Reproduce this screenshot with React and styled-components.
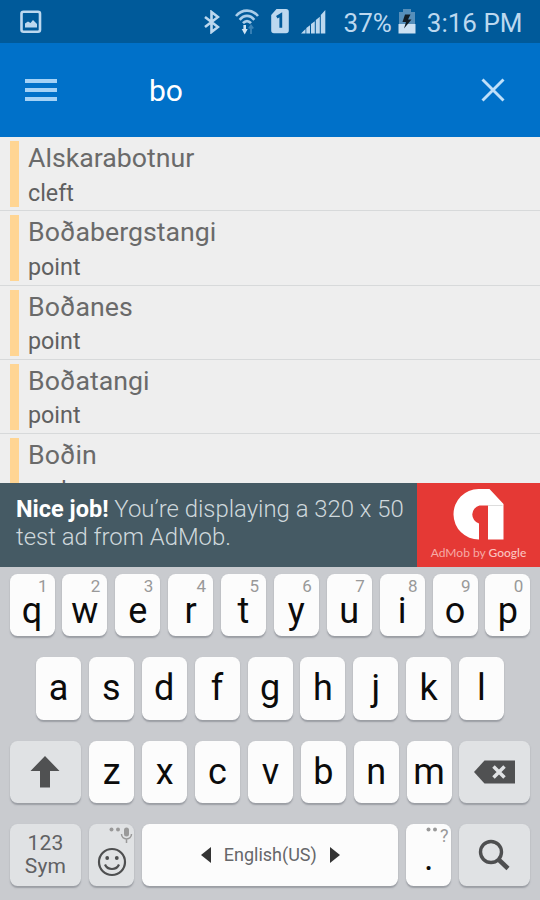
import React from 'react';
import styled, { createGlobalStyle } from 'styled-components';


const GlobalStyle = createGlobalStyle`
    * {
        box-sizing: border-box;
    }

    body {
        margin: 0;
        font-family: Roboto, "Liberation Sans", sans-serif;
    }
`;

const Screen = styled.div`
    display: flex;
    flex-direction: column;
    width: 540px;
    height: 900px;
    overflow: hidden;
    background: #c9cbcf;
`;

const StatusBar = styled.div`
    display: flex;
    align-items: center;
    justify-content: space-between;
    height: 43px;
    flex: none;
    padding: 0 17.5px 0 20px;
    background: #005a9a;
    color: #bcd8ef;
`;

const StatusGroup = styled.div`
    display: flex;
    align-items: center;
`;

const StatusText = styled.span`
    font-size: 26px;
    line-height: 43px;
    padding-top: 3px;
    margin-left: ${(props) => props.$left}px;
    white-space: nowrap;
`;

const StatusIcon = styled.svg`
    flex: none;
    margin-left: ${(props) => props.$left || 0}px;
`;

const AppBar = styled.div`
    display: flex;
    align-items: center;
    height: 94px;
    flex: none;
    padding: 0 34px 0 25px;
    background: #0071c9;
`;

const SearchText = styled.div`
    flex: 1;
    padding: 2px 0 0 92px;
    color: #fff;
    font-size: 30px;
    line-height: 36px;
`;

const MenuIcon = styled.div`
    display: flex;
    flex-direction: column;
    gap: 5.5px;
    width: 32px;
`;

const MenuLine = styled.div`
    height: 3.6px;
    background: #a4d2f6;
`;

const List = styled.div`
    height: 346px;
    flex: none;
    overflow: hidden;
    background: #eee;
`;

const ItemContainer = styled.div`
    display: flex;
    height: 74.3px;
    padding: 4px 0 3px 9.5px;
    border-bottom: 1.5px solid #d7d9da;
`;

const Marker = styled.div`
    width: 9px;
    height: 66px;
    margin-right: 9.5px;
    background: #ffd593;
`;

const PlaceName = styled.div`
    color: #6a6a6a;
    font-size: 26.7px;
    line-height: 34px;
`;

const PlaceType = styled.div`
    color: #606060;
    font-size: 23.3px;
    line-height: 34px;
    padding-top: 0.5px;
`;

const Ad = styled.div`
    display: flex;
    height: 84px;
    flex: none;
    background: #455a64;
`;

const AdText = styled.div`
    width: 417px;
    padding: 12px 0 0 16px;
    color: #cfd8dc;
    font-size: 23.9px;
    font-weight: 300;
    line-height: 28px;
    white-space: nowrap;

    b {
        color: #fff;
        font-size: 23.5px;
        font-weight: 700;
    }
`;

const AdLogo = styled.div`
    display: flex;
    flex-direction: column;
    align-items: center;
    width: 123px;
    padding-top: 6px;
    background: #e53935;
    color: #f6aaa5;
    font-family: Lato, sans-serif;
    font-size: 12px;
    line-height: 20px;
    white-space: nowrap;
`;

const Google = styled.span`
    color: #fbc4c0;
    font-weight: 500;
`;

const Keyboard = styled.div`
    display: flex;
    flex-direction: column;
    gap: 21px;
    flex: 1;
    padding: 7px 9.5px 0;
    background: #c9cbcf;
`;

const KeyRow = styled.div`
    display: flex;
    gap: 7.88px;
    padding: 0 ${(props) => props.$inset || 0}px;
`;

const Key = styled.div`
    position: relative;
    display: flex;
    flex-direction: column;
    align-items: center;
    justify-content: center;
    flex: none;
    width: ${(props) => props.$width || 45}px;
    height: 62.3px;
    padding-top: ${(props) => props.$top || 0}px;
    border-radius: 7.5px;
    background: ${(props) => (props.$dark ? '#e0e2e4' : '#fcfcfc')};
    box-shadow: 0 1.5px 1.5px rgba(90, 95, 105, 0.42);
    color: #0b0b0b;
    font-size: 36px;
    line-height: 36px;
`;

const Hint = styled.span`
    position: absolute;
    top: 4px;
    right: 7px;
    color: #999;
    font-size: 17px;
    line-height: 17px;
`;

const CornerHint = styled.svg`
    position: absolute;
    top: 2px;
    right: 0;
`;

const SymLabel = styled.div`
    color: #606163;
    font-size: 21px;
    line-height: 23px;
    letter-spacing: 0.2px;
    text-align: center;
`;

const SpaceLabel = styled.div`
    display: flex;
    align-items: center;
    gap: 13px;
    color: #66676a;
    font-size: 18px;
    line-height: 22px;
`;

const places = [
  { name: 'Alskarabotnur', type: 'cleft' },
  { name: 'Boðabergstangi', type: 'point' },
  { name: 'Boðanes', type: 'point' },
  { name: 'Boðatangi', type: 'point' },
  { name: 'Boðin', type: 'rocks' },
];

const numbers = '1234567890';

function Status() {
  return (
    <StatusBar>
      <StatusIcon width="22" height="24" viewBox="0 0 22 24">
        <rect x="1.5" y="1.8" width="18.5" height="20" rx="2" fill="none" stroke="#bcd8ef" strokeWidth="2.6" />
        <path d="M5 17.5v-4l3-2 2.5 1.5 2.5-3 4 4v3.5z" fill="#bcd8ef" />
      </StatusIcon>
      <StatusGroup>
        <StatusIcon width="16" height="24" viewBox="0 0 16 24">
          <path d="M1 7l13 10-6.5 5V2L14 7 1 17" fill="none" stroke="#bcd8ef" strokeWidth="2.6" />
        </StatusIcon>
        <StatusIcon $left={15} width="24" height="28" viewBox="0 0 24 28" fill="none" stroke="#a9cde9" strokeWidth="2.6">
          <path d="M1 8C7 .8 17 .8 23 8M4.700 11.800C9 6.600 15 6.600 19.300 11.800M8 15.200c2.500-2.800 5.500-2.800 8 0" />
          <path d="M9.7 17v5" stroke="#cfe3f3" />
          <path d="M6.7 21h6l-3 5.5z" fill="#cfe3f3" stroke="none" />
          <path d="M16 26v-8M13.8 20.5L16 17.5l2.2 3" stroke="#3b83b7" strokeWidth="1.8" />
        </StatusIcon>
        <StatusIcon $left={12} width="18" height="25" viewBox="0 0 18 25">
          <path d="M5.5 0H15a2.8 2.8 0 0 1 2.8 2.8v18.7a2.8 2.8 0 0 1-2.8 2.8H3a2.8 2.8 0 0 1-2.8-2.8V6z" fill="#bcd8ef" />
          <path d="M5.8 8.3l4-2.5v13" fill="none" stroke="#005a9a" strokeWidth="2.8" />
        </StatusIcon>
        <StatusIcon $left={12} width="25" height="25" viewBox="0 0 25 25" fill="#bcd8ef">
          <path d="M0 24.5L4.500 20v4.5zM5.300 19l3.700-2.8v8.3H5.300zM10 15l3.8-2.8v12.3H10zM14.800 11l4-3.2v16.7h-4zM19.800 6l4.5-5v23.5h-4.500z" />
        </StatusIcon>
        <StatusText $left={18}>37%</StatusText>
        <StatusIcon $left={6} width="18" height="25" viewBox="0 0 18 25">
          <path d="M1 3h4V0h8v3h4v12H1z" fill="#568fba" />
          <path d="M.5 15h17v9.5H.5z" fill="#cce1f2" />
          <path d="M7 5.5h5.5L10 10.5h3.5L6 19.5l2-6.5H4.5z" fill="#111c24" />
        </StatusIcon>
        <StatusText $left={11}>3:16 PM</StatusText>
      </StatusGroup>
    </StatusBar>
  );
}

function Item({name, type}) {
  return (
    <ItemContainer>
      <Marker />
      <div>
        <PlaceName>{name}</PlaceName>
        <PlaceType>{type}</PlaceType>
      </div>
    </ItemContainer>
  );
}

function AdBanner() {
  return (
    <Ad>
      <AdText>
        <b>Nice job!</b> You’re displaying a 320 x 50<br />
        test ad from AdMob.
      </AdText>
      <AdLogo>
        <svg width="52" height="54" viewBox="0.5 0 52 54">
          <path d="M26.5 50.5A25.2 25.2 0 0 1 26 0h11l14 15v35.5H35.5V16.5H27a9.300 9.300 0 0 0-.5 18z" fill="#fff" />
          <path d="M35.5 16.5H50" stroke="#ddd" strokeWidth="1" />
        </svg>
        <span>AdMob by <Google>Google</Google></span>
      </AdLogo>
    </Ad>
  );
}

// 일반 글자 키
function Letters({letters}) {
  return letters.split('').map((letter) => <Key key={letter}>{letter}</Key>);
}

function App() {
  return (
    <Screen>
      <GlobalStyle />
      <Status />
      <AppBar>
        <MenuIcon>
          <MenuLine />
          <MenuLine />
          <MenuLine />
        </MenuIcon>
        <SearchText>bo</SearchText>
        <svg width="26" height="26" viewBox="0 0 26 26">
          <path d="M2.5 2.5l21 21M23.5 2.5l-21 21" stroke="#bfe0fa" strokeWidth="2.9" />
        </svg>
      </AppBar>
      <List>
        {places.map((place) => (
          <Item key={place.name} name={place.name} type={place.type} />
        ))}
      </List>
      <AdBanner />
      <Keyboard>
        <KeyRow>
          {'qwertyuiop'.split('').map((letter, index) => (
            <Key key={letter} $top={11}>
              <Hint>{numbers[index]}</Hint>
              {letter}
            </Key>
          ))}
        </KeyRow>
        <KeyRow $inset={26.5}>
          <Letters letters="asdfghjkl" />
        </KeyRow>
        <KeyRow>
          <Key $dark $width={71.9}>
            <svg width="30" height="32" viewBox="0 0 30 32">
              <path d="M15 0l14.5 15H20v16.5H10V15H.5z" fill="#505152" />
            </svg>
          </Key>
          <Letters letters="zxcvbnm" />
          <Key $dark $width={70.5}>
            <svg width="42" height="24" viewBox="0 0 42 24">
              <path d="M0 12L10.5 .5H41v23H10.5z" fill="#505152" />
              <path d="M19.5 6.5l11 11M30.5 6.5l-11 11" stroke="#e0e2e4" strokeWidth="3.5" />
            </svg>
          </Key>
        </KeyRow>
        <KeyRow>
          <Key $dark $width={71.9}>
            <SymLabel>123<br />Sym</SymLabel>
          </Key>
          <Key $dark $top={14}>
            <CornerHint width="26" height="18" viewBox="0 0 26 18" fill="#999">
              <circle cx="3.5" cy="3.5" r="2" />
              <circle cx="10" cy="3.5" r="2" />
              <rect x="16" y="1.5" width="5" height="9" rx="2.5" />
              <path d="M13.5 8c0 6.5 10 6.5 10 0M18.5 13v4" fill="none" stroke="#999" strokeWidth="1.5" />
            </CornerHint>
            <svg width="30" height="30" viewBox="0 0 30 30" fill="none" stroke="#4e4f50" strokeWidth="2.2">
              <circle cx="15" cy="15" r="13" />
              <path d="M8 17.5c2.5 6 11.5 6 14 0" />
              <circle cx="10.2" cy="11" r="1.9" fill="#4e4f50" stroke="none" />
              <circle cx="19.8" cy="11" r="1.9" fill="#4e4f50" stroke="none" />
            </svg>
          </Key>
          <Key $width={256.3}>
            <SpaceLabel>
              <svg width="10" height="16" viewBox="0 0 10 16">
                <path d="M10 0v16L0 8z" fill="#333" />
              </svg>
              English(US)
              <svg width="10" height="16" viewBox="0 0 10 16">
                <path d="M0 0v16l10-8z" fill="#333" />
              </svg>
            </SpaceLabel>
          </Key>
          <Key $top={6}>
            <CornerHint width="26" height="20" viewBox="0 0 26 20" fill="#999">
              <circle cx="3.5" cy="3.5" r="2" />
              <circle cx="10" cy="3.5" r="2" />
              <text x="15" y="15.5" fontSize="18">?</text>
            </CornerHint>
            .
          </Key>
          <Key $dark $width={70.5}>
            <svg width="32" height="32" viewBox="0 0 32 32" fill="none" stroke="#4e4f50">
              <circle cx="13" cy="13" r="10.5" strokeWidth="3.4" />
              <path d="M20 20l10 9.5" strokeWidth="4.5" />
            </svg>
          </Key>
        </KeyRow>
      </Keyboard>
    </Screen>
  );
}

export default App;
